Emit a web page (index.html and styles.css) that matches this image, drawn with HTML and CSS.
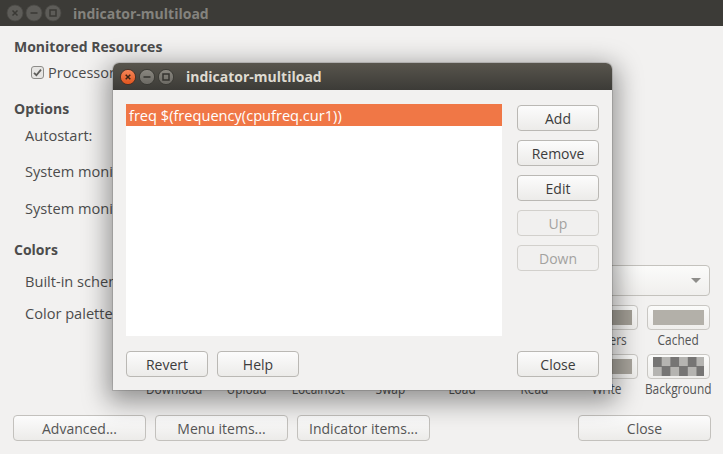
FILE: index.html
```html
<!DOCTYPE html>
<html>
<head>
<meta charset="utf-8">
<link rel="stylesheet" href="styles.css">
</head>
<body>
<div class="win main">
  <div class="titlebar inactive">
    <div class="wbtns">
      <svg class="wb" width="18" height="18" viewBox="-9 -9 18 18"><circle r="8" class="c-in"/><path d="M-2.5 -2.5 L2.5 2.5 M2.5 -2.5 L-2.5 2.5" class="g-in"/></svg>
      <svg class="wb" width="18" height="18" viewBox="-9 -9 18 18"><circle r="8" class="c-in"/><path d="M-3.5 0 H3.5" class="g-in"/></svg>
      <svg class="wb" width="18" height="18" viewBox="-9 -9 18 18"><circle r="8" class="c-in"/><rect x="-3" y="-3" width="6" height="6" class="g-in"/></svg>
    </div>
    <div class="title">indicator-multiload</div>
  </div>
  <div class="content">
    <div class="heading h1">Monitored Resources</div>
    <div class="checkrow">
      <svg class="check" width="13" height="13" viewBox="0 0 13 13"><rect x="0.5" y="0.5" width="12" height="12" rx="2.5" class="cb-box"/><path d="M3 6.8 L5.4 9.2 L10 3.6" class="cb-mark"/></svg>
      <span>Processor</span>
    </div>
    <div class="heading h2">Options</div>
    <div class="row r1">Autostart:</div>
    <div class="row r2">System monitor:</div>
    <div class="row r3">System monitor arguments:</div>
    <div class="heading h3">Colors</div>
    <div class="crow">
      <span class="lbl">Built-in schemes:</span>
      <div class="combo"><span class="arrow"></span></div>
    </div>
    <div class="prow">
      <span class="lbl plbl">Color palette:</span>
      <div class="palette">
        <div class="cell"><div class="sw"><i></i></div><span>User</span></div>
        <div class="cell"><div class="sw"><i></i></div><span>Nice</span></div>
        <div class="cell"><div class="sw"><i></i></div><span>System</span></div>
        <div class="cell"><div class="sw"><i></i></div><span>IOWait</span></div>
        <div class="cell"><div class="sw"><i></i></div><span>IRQs</span></div>
        <div class="cell"><div class="sw"><i></i></div><span>Used</span></div>
        <div class="cell"><div class="sw"><i class="dark"></i></div><span>Buffers</span></div>
        <div class="cell"><div class="sw"><i class="light"></i></div><span>Cached</span></div>
        <div class="cell"><div class="sw"><i></i></div><span>Download</span></div>
        <div class="cell"><div class="sw"><i></i></div><span>Upload</span></div>
        <div class="cell"><div class="sw"><i></i></div><span>Localhost</span></div>
        <div class="cell"><div class="sw"><i></i></div><span>Swap</span></div>
        <div class="cell"><div class="sw"><i></i></div><span>Load</span></div>
        <div class="cell"><div class="sw"><i></i></div><span>Read</span></div>
        <div class="cell"><div class="sw"><i></i></div><span>Write</span></div>
        <div class="cell"><div class="sw swc"><i class="checker"></i></div><span>Background</span></div>
      </div>
    </div>
    <div class="bottom">
      <div class="btn wide">Advanced...</div>
      <div class="btn wide">Menu items...</div>
      <div class="btn wide">Indicator items...</div>
      <div class="spacer"></div>
      <div class="btn wide">Close</div>
    </div>
  </div>

  <div class="dialog">
    <div class="titlebar active">
      <div class="wbtns">
        <svg class="wb" width="18" height="18" viewBox="-9 -9 18 18"><defs><linearGradient id="og" x1="0" y1="0" x2="0" y2="1"><stop offset="0" stop-color="#f6875a"/><stop offset="1" stop-color="#e0531c"/></linearGradient><linearGradient id="gg" x1="0" y1="0" x2="0" y2="1"><stop offset="0" stop-color="#8a8780"/><stop offset="1" stop-color="#6b6963"/></linearGradient></defs><circle r="7.6" fill="url(#og)" stroke="#3a2a22" stroke-width="0.8"/><path d="M-2.3 -2.3 L2.3 2.3 M2.3 -2.3 L-2.3 2.3" class="g-close"/></svg>
        <svg class="wb" width="18" height="18" viewBox="-9 -9 18 18"><circle r="7.6" fill="url(#gg)" stroke="#34332f" stroke-width="0.8"/><path d="M-3.5 0 H3.5" class="g-act"/></svg>
        <svg class="wb" width="18" height="18" viewBox="-9 -9 18 18"><circle r="7.6" fill="url(#gg)" stroke="#34332f" stroke-width="0.8"/><rect x="-3" y="-3" width="6" height="6" class="g-act"/></svg>
      </div>
      <div class="title">indicator-multiload</div>
    </div>
    <div class="dbody">
      <div class="dtop">
        <div class="list">
          <div class="item sel">freq $(frequency(cpufreq.cur1))</div>
        </div>
        <div class="side">
          <div class="btn">Add</div>
          <div class="btn">Remove</div>
          <div class="btn">Edit</div>
          <div class="btn dis">Up</div>
          <div class="btn dis">Down</div>
        </div>
      </div>
      <div class="dbottom">
        <div class="btn">Revert</div>
        <div class="btn">Help</div>
        <div class="spacer"></div>
        <div class="btn">Close</div>
      </div>
    </div>
  </div>
</div>
</body>
</html>
```
FILE: styles.css
```css
* { box-sizing: border-box; }
html, body { margin: 0; padding: 0; }
body {
  width: 723px;
  height: 454px;
  overflow: hidden;
  background: #f2f1f0;
  font-family: "Open Sans", "Noto Sans", sans-serif;
  font-size: 14px;
  color: #4c4c4c;
}
.win.main {
  position: relative;
  width: 723px;
  height: 454px;
  display: flex;
  flex-direction: column;
  background: #f2f1f0;
}
.titlebar {
  display: flex;
  align-items: center;
  flex: none;
}
.titlebar.inactive {
  height: 26px;
  background: #3c3b37;
  padding-left: 6px;
}
.wbtns { display: flex; gap: 1px; align-items: center; }
.wb { display: block; }
.c-in { fill: #5d5c58; stroke: #4a4945; stroke-width: 0.8; }
.g-in { fill: none; stroke: #3a3935; stroke-width: 1.5; }
.g-close { fill: none; stroke: #3b2416; stroke-width: 1.5; }
.g-act { fill: none; stroke: #34332f; stroke-width: 1.5; }
.titlebar .title {
  font-weight: bold;
  font-size: 14px;
  margin-left: 11px;
}
.titlebar.inactive .title { color: #84837e; }

.content {
  flex: 1;
  display: flex;
  flex-direction: column;
  padding: 0 12px 13px 14px;
}
.heading {
  font-weight: bold;
  line-height: 20px;
  height: 20px;
}
.h1 { margin-top: 11px; }
.h2 { margin-top: 15px; }
.h3 { margin-top: 17px; }
.checkrow {
  margin-top: 3px;
  height: 24px;
  display: flex;
  align-items: center;
  padding-left: 17px;
  gap: 4px;
  font-size: 14.5px;
}
.check { display: block; }
.cb-box { fill: #e6e5e3; stroke: #8d8c89; stroke-width: 1; }
.cb-mark { fill: none; stroke: #5e5d5a; stroke-width: 1.8; }
.row {
  height: 30px;
  line-height: 30px;
  padding-left: 11px;
  white-space: nowrap;
  font-size: 14.6px;
}
.r1 { margin-top: 1px; }
.r2 { margin-top: 6px; }
.r3 { margin-top: 7px; }
.crow {
  margin-top: 5px;
  display: flex;
  align-items: center;
  padding-left: 11px;
}
.lbl { width: 118px; flex: none; white-space: nowrap; font-size: 14.6px; }
.combo {
  flex: 1;
  height: 31px;
  margin-right: 1px;
  border: 1px solid #c4c2bd;
  border-radius: 4px;
  background: linear-gradient(#fbfbfa, #f0efed);
  position: relative;
  display: flex;
  align-items: center;
  justify-content: flex-end;
  padding-right: 8px;
}
.arrow {
  width: 0; height: 0;
  border-left: 5px solid transparent;
  border-right: 5px solid transparent;
  border-top: 5px solid #8e8d8a;
}
.prow {
  margin-top: 9px;
  display: flex;
  padding-left: 11px;
}
.plbl { line-height: 16px; }
.palette {
  display: grid;
  grid-template-columns: repeat(8, 63px);
  column-gap: 9px;
  row-gap: 5px;
}
.cell {
  display: flex;
  flex-direction: column;
  align-items: center;
}
.cell span {
  line-height: 19px;
  white-space: nowrap;
  color: #555;
  transform: scaleX(0.85);
}
.sw {
  width: 63px;
  height: 25px;
  border: 1px solid #c9c7c3;
  border-radius: 4px;
  background: linear-gradient(#fbfbfa, #efeeec);
  padding: 4px 5px;
}
.sw.swc { padding: 2px 5px; }
.sw i {
  display: block;
  width: 100%;
  height: 100%;
  background: #a9a59d;
}
.sw i.dark { background: #a39f96; }
.sw i.light { background: #b3b0a9; }
.sw i.checker {
  background: repeating-conic-gradient(#b5b4b1 0 25%, #767574 0 50%) 0 0 / 17.4px 19px;
}
.bottom {
  margin-top: auto;
  display: flex;
  gap: 9px;
  margin-left: -1px;
  margin-right: 0;
}
.spacer { flex: 1; }
.btn {
  height: 26px;
  width: 82px;
  border: 1px solid #bab8b4;
  border-radius: 4px;
  background: linear-gradient(#fcfcfc, #ecebe9);
  display: flex;
  align-items: center;
  justify-content: center;
  color: #3c3c3c;
  white-space: nowrap;
  flex: none;
}
.btn.wide { width: 133px; color: #555; border-color: #c3c1bd; }
.btn.dis {
  color: #a3a29f;
  background: #f1f0ef;
  border-color: #d2d0cc;
}

.dialog {
  position: absolute;
  left: 113px;
  top: 63px;
  width: 499px;
  height: 327px;
  border-radius: 6px 6px 0 0;
  background: #f2f1f0;
  box-shadow: 0 7px 26px 5px rgba(0,0,0,0.4), 0 0 0 1px rgba(0,0,0,0.12);
  display: flex;
  flex-direction: column;
}
.titlebar.active {
  height: 27px;
  border-radius: 6px 6px 0 0;
  background: linear-gradient(#58554d, #3c3b37);
  padding-left: 6px;
}
.titlebar.active .title { color: #dfdbd2; margin-left: 11px; }
.dbody {
  flex: 1;
  padding: 14px 13px 13px 13px;
  display: flex;
  flex-direction: column;
}
.dtop { display: flex; gap: 15px; }
.list {
  width: 376px;
  height: 232px;
  background: #ffffff;
}
.item {
  height: 22px;
  line-height: 22px;
  padding-left: 3px;
  white-space: nowrap;
  font-size: 14.6px;
}
.item.sel { background: #f07746; color: #ffffff; }
.side {
  display: flex;
  flex-direction: column;
  gap: 9px;
  margin-top: 1px;
}
.dbottom {
  margin-top: auto;
  display: flex;
  gap: 9px;
}
```
